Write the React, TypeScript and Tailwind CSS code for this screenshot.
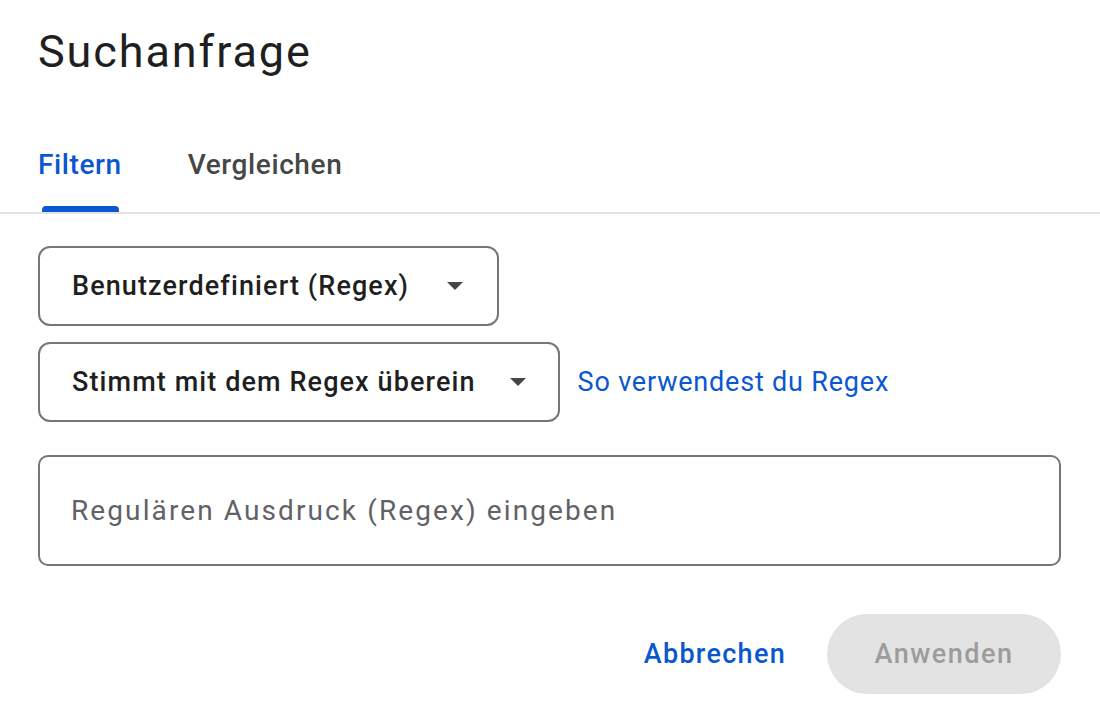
export default function App() {
  const Caret = () => (
    <svg width="16" height="8" viewBox="0 0 16 8" className="shrink-0">
      <path d="M0 0 L16 0 L8 8 Z" fill="#444746" />
    </svg>
  );

  return (
    <div className="w-[1100px] h-[720px] bg-white overflow-hidden font-['Roboto','Noto_Sans',sans-serif] text-[#1f1f1f]">
      <div className="pl-[38px] pt-[20px]">
        <h1 className="text-[45px] leading-[64px] font-normal tracking-[1.9px]">Suchanfrage</h1>
      </div>

      <div className="mt-[30px] flex gap-[66px] pl-[38px] h-[100px] border-b-2 border-[#e3e3e3]">
        <div className="relative flex items-center h-full">
          <span className="text-[28px] font-medium tracking-[0.6px] text-[#0b57d0] mt-[4px]">Filtern</span>
          <div className="absolute left-[4px] right-[3px] bottom-0 h-[6px] rounded-t-[4px] bg-[#0b57d0]" />
        </div>
        <div className="flex items-center h-full">
          <span className="text-[28px] font-medium tracking-[0.6px] text-[#444746] mt-[4px]">Vergleichen</span>
        </div>
      </div>

      <div className="px-[38px] pr-[39px] pt-[32px] flex flex-col">
        <div className="flex">
          <button className="h-[80px] inline-flex items-center gap-[38px] pl-[32px] pr-[34px] border-2 border-[#747775] rounded-[12px]">
            <span className="text-[27px] font-medium tracking-[1.1px]">Benutzerdefiniert (Regex)</span>
            <Caret />
          </button>
        </div>

        <div className="flex items-center gap-[18px] mt-[16px]">
          <button className="h-[80px] inline-flex items-center gap-[34px] pl-[32px] pr-[32px] border-2 border-[#747775] rounded-[12px]">
            <span className="text-[27px] font-medium tracking-[1.1px]">Stimmt mit dem Regex überein</span>
            <Caret />
          </button>
          <a className="text-[27px] tracking-[0.8px] text-[#0b57d0]">So verwendest du Regex</a>
        </div>

        <div className="mt-[33px] h-[111px] border-2 border-[#747775] rounded-[10px] flex items-center pl-[31px]">
          <span className="text-[28px] tracking-[2.1px] text-[#5f6368]">Regulären Ausdruck (Regex) eingeben</span>
        </div>

        <div className="mt-[48px] flex justify-end items-center gap-[41px]">
          <button className="text-[27px] font-medium tracking-[1.3px] text-[#0b57d0]">Abbrechen</button>
          <button className="h-[80px] w-[234px] rounded-full bg-[#e3e3e3] text-[27px] font-medium tracking-[1.5px] text-[#9c9c9c]">
            Anwenden
          </button>
        </div>
      </div>
    </div>
  );
}
